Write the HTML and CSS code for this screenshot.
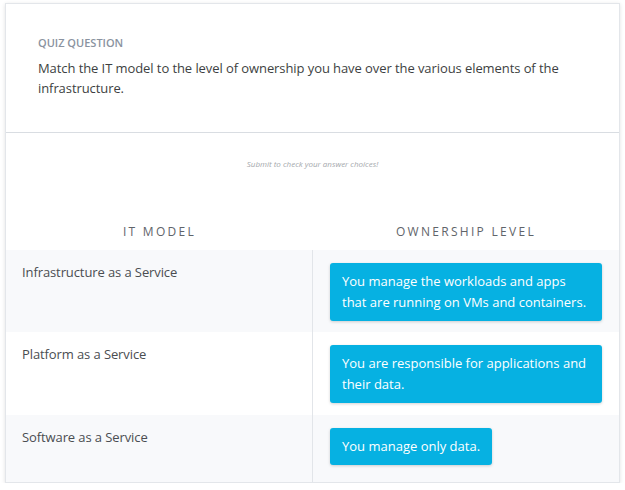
FILE: index.html
```html
<!DOCTYPE html>
<html>
<head>
<meta charset="utf-8">
<link rel="stylesheet" href="styles.css">
</head>
<body>
<div class="card">
  <div class="question">
    <div class="label">QUIZ QUESTION</div>
    <div class="prompt">Match the IT model to the level of ownership you have over the various elements of the infrastructure.</div>
  </div>
  <div class="body">
    <div class="hint">Submit to check your answer choices!</div>
    <div class="heads">
      <div class="head">IT MODEL</div>
      <div class="head">OWNERSHIP LEVEL</div>
    </div>
    <div class="row shade">
      <div class="term">Infrastructure as a Service</div>
      <div class="answer"><span class="chip">You manage the workloads and apps that are running on VMs and containers.</span></div>
    </div>
    <div class="row">
      <div class="term">Platform as a Service</div>
      <div class="answer"><span class="chip">You are responsible for applications and their data.</span></div>
    </div>
    <div class="row shade last">
      <div class="term">Software as a Service</div>
      <div class="answer"><span class="chip">You manage only data.</span></div>
    </div>
  </div>
</div>
</body>
</html>
```
FILE: styles.css
```css
* { box-sizing: border-box; }
html, body { margin: 0; padding: 0; background: #ffffff; }
body {
  font-family: "Open Sans", "Noto Sans", sans-serif;
  padding: 3px 5px 0 5px;
}
.card {
  width: 615px;
  height: 480px;
  background: #fff;
  border: 1px solid #e3e6ea;
  box-shadow: 0 1px 4px rgba(0,0,0,0.12);
  display: flex;
  flex-direction: column;
}
.question {
  padding: 31px 32px 0 32px;
  height: 129px;
  border-bottom: 1px solid #d9dde2;
}
.label {
  font-size: 11px;
  font-weight: 600;
  color: #8a93a0;
  line-height: 15px;
}
.prompt {
  margin-top: 8px;
  font-size: 13px;
  letter-spacing: -0.08px;
  line-height: 20px;
  color: #3d3f42;
}
.body { flex: 1; display: flex; flex-direction: column; }
.hint {
  margin-top: 26px;
  text-align: center;
  font-size: 8px;
  font-style: italic;
  color: #a5a8ac;
  line-height: 10px;
}
.heads {
  margin-top: 55px;
  display: grid;
  grid-template-columns: 307px 1fr;
  height: 26px;
}
.head {
  text-align: center;
  font-size: 12px;
  letter-spacing: 2.3px;
  color: #5f646a;
  line-height: 16px;
}
.row {
  display: grid;
  grid-template-columns: 307px 1fr;
  height: 82px;
}
.row + .row { height: 83px; }
.row.last { flex: 1; height: auto; }
.shade { background: #f8f9fb; }
.term {
  padding: 14px 16px;
  font-size: 13px;
  letter-spacing: -0.1px;
  line-height: 16px;
  color: #4a4d51;
  border-right: 1px solid #e2e5e9;
}
.answer { padding: 13px 17px 0 17px; }
.chip {
  display: inline-block;
  background: #06b1e2;
  color: #fff;
  font-size: 13px;
  font-weight: 500;
  line-height: 21px;
  padding: 8px 12px 8px 12px;
  border-radius: 3px;
  box-shadow: 0 1px 3px rgba(0,0,0,0.18);
  max-width: 272px;
}
```
